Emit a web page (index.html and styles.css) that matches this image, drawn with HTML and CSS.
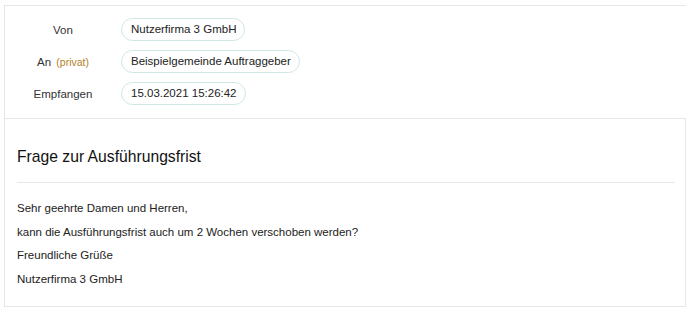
FILE: index.html
```html
<!DOCTYPE html>
<html lang="de">
<head>
    <meta charset="UTF-8">
    <title>Nachricht</title>
    <link rel="stylesheet" href="styles.css">
</head>
<body>
<div class="mail">
    <!-- Kopfdaten -->
    <div class="mail-head">
        <div class="label">Von</div>
        <div><span class="pill">Nutzerfirma 3 GmbH</span></div>
        <div class="label">An <span class="hint">(privat)</span></div>
        <div><span class="pill">Beispielgemeinde Auftraggeber</span></div>
        <div class="label">Empfangen</div>
        <div><span class="pill">15.03.2021 15:26:42</span></div>
    </div>

    <!-- Inhalt -->
    <div class="mail-body">
        <h2 class="subject">Frage zur Ausführungsfrist</h2>
        <div class="text">
            <p>Sehr geehrte Damen und Herren,</p>
            <p>kann die Ausführungsfrist auch um 2 Wochen verschoben werden?</p>
            <p>Freundliche Grüße</p>
            <p>Nutzerfirma 3 GmbH</p>
        </div>
    </div>
</div>
</body>
</html>
```

FILE: styles.css
```css
* {
    margin: 0;
    padding: 0;
    box-sizing: border-box;
}

body {
    font-family: 'Liberation Sans', Arial, sans-serif;
    font-size: 11.5px;
    color: #222;
    background: #fff;
}

.mail {
    width: 682px;
    margin: 5px 0 0 4px;
}

/* Kopfdaten */
.mail-head {
    display: grid;
    grid-template-columns: 116px auto;
    row-gap: 9px;
    align-items: center;
    padding: 12px 0 13px;
    border-top: 1px solid #e6e6e6;
    border-left: 1px solid #e6e6e6;
}

.label {
    text-align: center;
    color: #333;
}

.hint {
    margin-left: 2px;
    font-size: 10.5px;
    color: #b0842c;
}

.pill {
    display: inline-block;
    height: 23px;
    line-height: 21px;
    padding: 0 8px 0 9px;
    border: 1px solid #cfe7e4;
    border-radius: 12px;
    color: #222;
}

/* Inhalt */
.mail-body {
    border: 1px solid #e6e6e6;
    padding: 0 10px 24px 12px;
    height: 189px;
}

.subject {
    font-size: 15.7px;
    font-weight: normal;
    color: #111;
    padding: 29px 0 16px;
    border-bottom: 1px solid #e8e8e8;
}

.text {
    padding-top: 14px;
}

.text p {
    line-height: 23.5px;
}
```
